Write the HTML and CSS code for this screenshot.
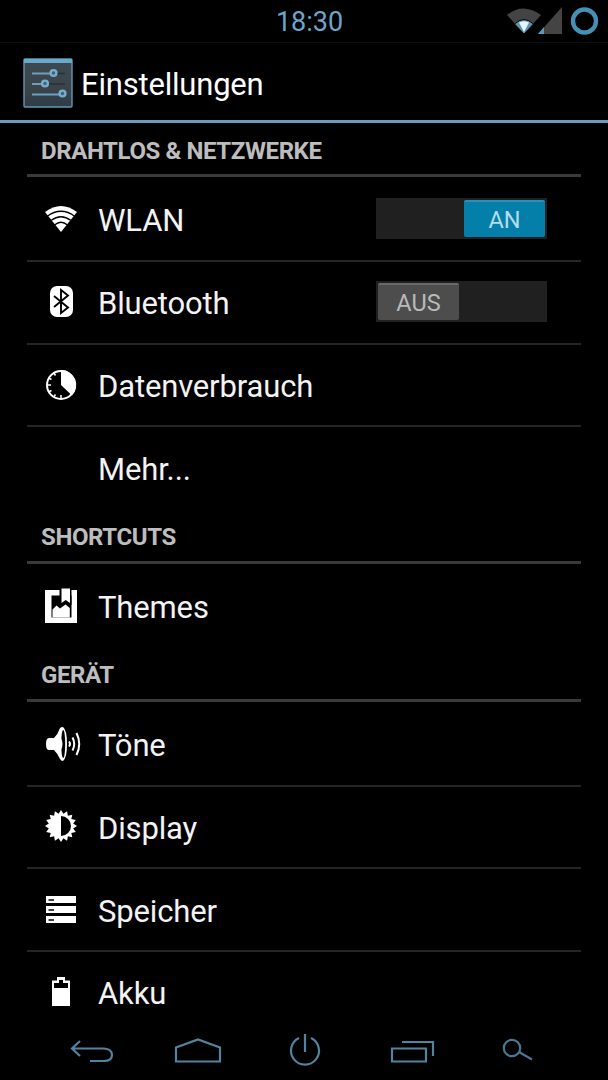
FILE: index.html
```
<!DOCTYPE html>
<html lang="de">
<head>
    <meta charset="UTF-8">
    <meta name="viewport" content="width=device-width, initial-scale=1.0">
    <title>Einstellungen</title>
    <link rel="stylesheet" href="styles.css">
</head>
<body>
    <div class="screen">
        <div class="statusbar">
            <span class="clock">18:30</span>
            <svg class="status-icons" width="102" height="36" viewBox="0 0 102 36">
                <path d="M1 15Q17 2 35 15L18 34Z" fill="#444"/>
                <path d="M8.500 24Q18 15 27.500 24L18 34Z" fill="#5f93ad" stroke="#000" stroke-width="1"/>
                <path d="M13 22.500Q18 20 23 22.500L18 32Z" fill="#e4f6ff"/>
                <path d="M56 7V34H32Z" fill="#444"/>
                <path d="M38 27V34H32Z" fill="#5a9aba"/>
                <circle cx="78.500" cy="21" r="11.500" fill="none" stroke="#4690b5" stroke-width="4.400"/>
            </svg>
        </div>

        <div class="actionbar">
            <svg class="app-icon" width="50" height="50" viewBox="0 0 50 50">
                <defs>
                    <linearGradient id="tile" x1="0" y1="0" x2="0" y2="1">
                        <stop offset="0" stop-color="#3c4a52"/>
                        <stop offset=".6" stop-color="#3c444a"/>
                        <stop offset="1" stop-color="#2d3c47"/>
                    </linearGradient>
                </defs>
                <rect x="1" y="1" width="48" height="48" rx="1" fill="url(#tile)" stroke="#6595b3" stroke-width="1.4"/>
                <path d="M1 3H49" stroke="#6aa9cb" stroke-width="4"/>
                <path d="M30 15.500H42M22 26H42" stroke="#25313a" stroke-width="1.500"/>
                <path d="M9 15.500H28M9 26H19M9 36.500H37" stroke="#6f9fbe" stroke-width="2"/>
                <g fill="#346587" stroke="#7aaccc" stroke-width="2.400">
                    <circle cx="30.500" cy="15" r="2.900"/>
                    <circle cx="22" cy="25.500" r="2.900"/>
                    <circle cx="39.500" cy="35.500" r="2.900"/>
                </g>
            </svg>
            <h1>Einstellungen</h1>
        </div>

        <div class="list">
            <h2 class="first">DRAHTLOS &amp; NETZWERKE</h2>
            <div class="row">
                <svg class="icon" width="40" height="40" viewBox="0 0 40 40">
                    <path d="M4 13Q20 1 36 13L20 33Z" fill="#fff"/>
                    <path d="M6 17.500Q20 7 34 17.500M10 21.500Q20 14 30 21.500M13.500 26Q20 20.500 26.500 26" fill="none" stroke="#000" stroke-width="1.300"/>
                </svg>
                <span class="label">WLAN</span>
                <div class="switch on"><span class="thumb">AN</span></div>
            </div>
            <div class="row">
                <svg class="icon" width="40" height="40" viewBox="0 0 40 40">
                    <rect x="9" y="4" width="23" height="31" rx="7" fill="#fff"/>
                    <path d="M13 14L27 25.500L20 31V8L27 13.500L13 25" fill="none" stroke="#000" stroke-width="1.900"/>
                </svg>
                <span class="label">Bluetooth</span>
                <div class="switch off"><span class="thumb">AUS</span></div>
            </div>
            <div class="row">
                <svg class="icon" width="40" height="40" viewBox="0 0 40 40">
                    <circle cx="20" cy="20" r="14" fill="none" stroke="#fff" stroke-width="2"/>
                    <path d="M20 5A15 15 0 0 1 31 30.500L20 20Z" fill="#fff"/>
                    <path d="M20 34V30M6 20H10M12.500 7.500L14.500 10.500M7.500 13L10.500 14.500M7.500 27L10.500 25.500M12.500 32L14.500 29.500" stroke="#fff" stroke-width="1.500"/>
                </svg>
                <span class="label">Datenverbrauch</span>
            </div>
            <div class="row last">
                <span class="icon"></span>
                <span class="label">Mehr...</span>
            </div>

            <h2>SHORTCUTS</h2>
            <div class="row last">
                <svg class="icon" width="40" height="40" viewBox="0 0 40 40">
                    <path fill-rule="evenodd" d="M4 4H36V37H4ZM10.500 9.500V31.500H30.500V9.500Z" fill="#fff"/>
                    <path d="M18.500 2H30.500V19H18.500Z" fill="#000"/>
                    <path d="M20.500 2.500H29V17L24.700 14L20.500 17ZM11.500 31.500V23.500L15.500 19.500L19 22.500L24.500 18.500L28.800 22V31.500Z" fill="#fff"/>
                </svg>
                <span class="label">Themes</span>
            </div>

            <h2>GERÄT</h2>
            <div class="row">
                <svg class="icon" width="40" height="40" viewBox="0 0 40 40">
                    <path d="M8 14H13Q17 10 19 4Q20 3 22 3Q26 6 26 20Q26 34 22 37Q20 37 19 35Q17 30 13 26H8Q5 26 5 20Q5 14 8 14Z" fill="#fff"/>
                    <ellipse cx="22.200" cy="20" rx="2" ry="14" fill="#000"/>
                    <path d="M20 14Q23 20 20 26Z" fill="#fff"/>
                    <path d="M28 17.500Q30 20 28 22.500M31.500 13.500Q35 20 31.500 26.500M35.500 9Q41 20 35.500 31" fill="none" stroke="#fff" stroke-width="2"/>
                </svg>
                <span class="label">Töne</span>
            </div>
            <div class="row">
                <svg class="icon" width="40" height="40" viewBox="0 0 40 40">
                    <polygon fill="#fff" points="36,19 32.2,21.4 34.8,25.1 30.3,25.9 31.3,30.3 26.9,29.3 26.1,33.8 22.4,31.2 20,35 17.6,31.2 13.9,33.8 13.1,29.3 8.7,30.3 9.7,25.9 5.2,25.1 7.8,21.4 4,19 7.8,16.6 5.2,12.9 9.7,12.1 8.7,7.7 13.1,8.7 13.9,4.2 17.6,6.8 20,3 22.4,6.8 26.1,4.2 26.9,8.7 31.3,7.7 30.3,12.1 34.8,12.9 32.2,16.6"/>
                    <path d="M20 9A10 10 0 0 1 20 29Z" fill="#000"/>
                </svg>
                <span class="label">Display</span>
            </div>
            <div class="row">
                <svg class="icon" width="40" height="40" viewBox="0 0 40 40">
                    <path d="M5 6H35V13H5ZM5 16H35V23H5ZM5 26H35V33H5Z" fill="#fff"/>
                    <path d="M7.500 10H13M7.500 20H13M7.500 30H13" stroke="#000" stroke-width="1.500"/>
                </svg>
                <span class="label">Speicher</span>
            </div>
            <div class="row last">
                <svg class="icon" width="40" height="40" viewBox="0 0 40 40">
                    <path fill-rule="evenodd" d="M11 8.500H16V5H24V8.500H29V34H11ZM13 11V16H27V11H22V8H18V11Z" fill="#fff"/>
                </svg>
                <span class="label">Akku</span>
            </div>
        </div>

        <div class="navbar">
            <svg width="46" height="36" viewBox="0 0 46 36"><path d="M11 8L3 15.500L11 23M3 15.500H35Q43 16 43 22T35 28H21"/></svg>
            <svg width="50" height="36" viewBox="0 0 50 36"><path d="M3 28.500V14.500L25 6.500L47 14.500V28.500Z"/></svg>
            <svg width="46" height="36" viewBox="0 0 46 36"><path d="M17 5A14 14 0 1 0 29 5M23 1V19"/></svg>
            <svg width="50" height="36" viewBox="0 0 50 36"><path d="M6 15.500H40V28.500H6ZM16 9H47V23"/></svg>
            <svg class="search" width="46" height="36" viewBox="0 0 46 36"><circle cx="18" cy="15" r="8.200"/><path d="M25 19L38 26.500"/></svg>
        </div>
    </div>
</body>
</html>
```
FILE: styles.css
```
* {
    margin: 0;
    padding: 0;
    box-sizing: border-box;
}

body {
    font-family: Roboto, "Noto Sans", sans-serif;
    background: #000;
    color: #f3f3f3;
}

.screen {
    width: 608px;
    height: 1080px;
    display: flex;
    flex-direction: column;
    overflow: hidden;
}

.statusbar {
    flex: none;
    height: 43px;
    border-bottom: 1px solid #0b0f10;
    display: grid;
    grid-template-columns: 1fr auto 1fr;
}

.clock {
    grid-column: 2;
    color: #6ba6cc;
    font-size: 27px;
    line-height: 45px;
    height: 42px;
    padding-left: 11px;
}

.status-icons {
    justify-self: end;
}

.actionbar {
    flex: none;
    height: 80px;
    border-bottom: 3px solid #6c9bbd;
    display: flex;
    align-items: center;
    padding: 2px 0 0 23px;
}

.app-icon {
    margin-right: 8px;
}

h1 {
    font-size: 31px;
    font-weight: 400;
    letter-spacing: -0.2px;
    color: #fff;
    padding-top: 3px;
}

.list {
    flex: 1;
    min-height: 0;
    margin: 0 27px;
}

h2 {
    height: 53.5px;
    margin-bottom: 2px;
    padding: 11px 14px 0;
    border-bottom: 3px solid #3a3a3a;
    font-size: 24px;
    line-height: 32px;
    font-weight: 700;
    letter-spacing: -0.4px;
    color: #bdbdbd;
}

h2.first {
    height: 54px;
    padding-top: 12px;
}

.row {
    height: 82.75px;
    border-bottom: 2px solid #252525;
    display: flex;
    align-items: center;
    padding-left: 14px;
}

.row.last {
    border-bottom-color: transparent;
}

.icon {
    width: 40px;
    height: 40px;
    margin-right: 17px;
}

.label {
    font-size: 31px;
    letter-spacing: -0.15px;
    padding-top: 3px;
}

.switch {
    width: 171px;
    height: 41px;
    margin: 0 34px 2px auto;
    padding: 2px;
    background: #202020;
    display: flex;
}

.switch.on {
    justify-content: flex-end;
}

.thumb {
    width: 81px;
    height: 37px;
    border-radius: 2px;
    border-top: 2px solid #696969;
    background: #4d4d4d;
    color: #b9b9b9;
    font-size: 23.5px;
    line-height: 37px;
    text-align: center;
}

.on .thumb {
    background: #047fa9;
    border-top-color: #2991b5;
    color: #b3dced;
}

.navbar {
    height: 47px;
    flex: none;
    padding: 0 68px 0 69px;
    display: flex;
    justify-content: space-between;
}

.navbar svg {
    fill: none;
    stroke: #52839f;
    stroke-width: 2.2;
}

.navbar .search {
    stroke: #4d7690;
}
```
